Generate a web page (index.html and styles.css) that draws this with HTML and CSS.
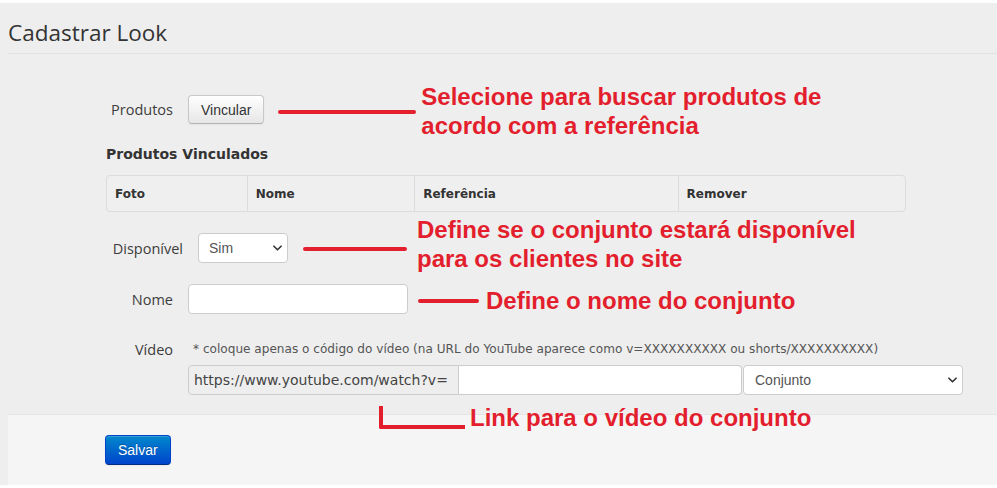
FILE: index.html
```html
<!DOCTYPE html>
<html lang="pt-BR">
<head>
<meta charset="utf-8">
<title>Cadastrar Look</title>
<link rel="stylesheet" href="styles.css">
</head>
<body>
<div class="page">
  <h1 class="page-title">Cadastrar Look</h1>

  <form class="form">
    <div class="row row-produtos">
      <span class="label">Produtos</span>
      <button type="button" class="btn">Vincular</button>
      <span class="mark mark-1"></span>
      <span class="note note-1">Selecione para buscar produtos de<br>acordo com a referência</span>
    </div>

    <div class="section-title">Produtos Vinculados</div>

    <table class="table">
      <thead>
        <tr>
          <th class="col-foto">Foto</th>
          <th class="col-nome">Nome</th>
          <th class="col-ref">Referência</th>
          <th class="col-rem">Remover</th>
        </tr>
      </thead>
    </table>

    <div class="row row-disp">
      <span class="label label-wide">Disponível</span>
      <span class="select-wrap select-sim">
        <select class="select"><option>Sim</option><option>Não</option></select>
        <svg class="chev" viewBox="0 0 10 6" width="9" height="6"><path d="M1 1l4 4 4-4" fill="none" stroke="#333" stroke-width="1.8" stroke-linecap="round" stroke-linejoin="round"/></svg>
      </span>
      <span class="mark mark-2"></span>
      <span class="note note-2">Define se o conjunto estará disponível<br>para os clientes no site</span>
    </div>

    <div class="row row-nome">
      <span class="label">Nome</span>
      <input class="input input-nome" type="text">
      <span class="mark mark-3"></span>
      <span class="note note-3">Define o nome do conjunto</span>
    </div>

    <div class="row row-hint">
      <span class="label">Vídeo</span>
      <span class="hint">* coloque apenas o código do vídeo (na URL do YouTube aparece como v=XXXXXXXXXX ou shorts/XXXXXXXXXX)</span>
    </div>

    <div class="row row-video">
      <div class="input-group">
        <span class="addon">https://www.youtube.com/watch?v=</span>
        <input class="input input-code" type="text">
      </div>
      <span class="select-wrap select-tipo">
        <select class="select"><option>Conjunto</option></select>
        <svg class="chev" viewBox="0 0 10 6" width="9" height="6"><path d="M1 1l4 4 4-4" fill="none" stroke="#333" stroke-width="1.8" stroke-linecap="round" stroke-linejoin="round"/></svg>
      </span>
      <div class="callout-video">
        <span class="mark-l"></span>
        <span class="note">Link para o vídeo do conjunto</span>
      </div>
    </div>
  </form>

  <div class="footer">
    <button type="button" class="btn btn-primary">Salvar</button>
  </div>
</div>
</body>
</html>
```

FILE: styles.css
```css
* { box-sizing: border-box; }

html, body {
  margin: 0;
  padding: 0;
  background: #ffffff;
}

body {
  padding-top: 3px;
  font-family: "Open Sans", "Liberation Sans", sans-serif;
  color: #333;
}

.page {
  background: #eeeeee;
  height: 482px;
  display: flex;
  flex-direction: column;
}

.page-title {
  margin: 0 0 0 8px;
  padding-top: 10px;
  height: 51px;
  line-height: 40px;
  font-size: 22.5px;
  font-weight: 400;
  color: #333;
  border-bottom: 1px solid #e2e2e2;
}

.form {
  padding: 41px 0 19px 106px;
  margin: 0;
  flex: 0 0 auto;
  position: relative;
}

.row {
  display: flex;
  align-items: center;
  height: 30px;
  position: relative;
}

.row-produtos { height: 29px; }

.label {
  width: 67px;
  padding-left: 5px;
  margin-right: 15px;
  text-align: right;
  font-size: 14.5px;
  color: #3d3d3d;
  white-space: nowrap;
  flex: 0 0 auto;
}
.label-wide { width: 77px; }

.btn {
  font-family: "Liberation Sans", Arial, sans-serif;
  font-size: 14px;
  color: #333;
  height: 29px;
  padding: 0 12px;
  border: 1px solid #c8c8c8;
  border-bottom-color: #b3b3b3;
  border-radius: 4px;
  background: linear-gradient(#ffffff, #e6e6e6);
  box-shadow: inset 0 1px 0 rgba(255,255,255,.2), 0 1px 2px rgba(0,0,0,.05);
  flex: 0 0 auto;
}

.btn-primary {
  height: 30px;
  color: #fff;
  border-color: #0044cc #0044cc #002a80;
  background: linear-gradient(#0088cc, #0044cc);
  text-shadow: 0 -1px 0 rgba(0,0,0,.25);
}

.mark {
  display: block;
  height: 4px;
  border-radius: 2px;
  background: #e31e2d;
  flex: 0 0 auto;
}
.mark-1 { width: 138px; margin-left: 14px; margin-top: 5px; }
.mark-2 { width: 104px; margin-left: 15px; margin-top: 2px; }
.mark-3 { width: 61px; margin-left: 10px; margin-top: 4px; }

.note {
  font-family: "Liberation Sans", Arial, sans-serif;
  font-weight: 700;
  font-size: 24px;
  line-height: 29px;
  color: #e31e2d;
  white-space: nowrap;
  flex: 0 0 auto;
}
.note-1 { margin-left: 5px; margin-top: 2px; }
.note-2 { margin-left: 10px; margin-bottom: 9px; }
.note-3 { margin-left: 7px; margin-top: 2px; }

.section-title {
  margin-top: 20px;
  height: 20px;
  line-height: 20px;
  font-family: "DejaVu Sans", Verdana, sans-serif;
  font-weight: 700;
  font-size: 14px;
  color: #333;
}

.table {
  margin-top: 11px;
  width: 800px;
  border-collapse: separate;
  border-spacing: 0;
  border: 1px solid #dcdcdc;
  border-radius: 4px;
  background: #efefef;
}

.table th {
  text-align: left;
  font-family: "DejaVu Sans", Verdana, sans-serif;
  font-size: 12px;
  font-weight: 700;
  color: #333;
  line-height: 20px;
  padding: 8px 8px 7px 8px;
  border-left: 1px solid #dcdcdc;
}
.table th:first-child { border-left: 0; }
.col-foto { width: 140px; }
.col-nome { width: 168px; }
.col-ref { width: 264px; }
.col-rem { width: 228px; }

.row-disp { margin-top: 21px; }
.row-nome { margin-top: 21px; }

.select-wrap {
  position: relative;
  display: block;
  flex: 0 0 auto;
}

.select {
  -webkit-appearance: none;
  appearance: none;
  height: 30px;
  margin: 0;
  padding: 0 22px 0 10px;
  font-family: "Liberation Sans", Arial, sans-serif;
  font-size: 14px;
  color: #555;
  background: #fff;
  border: 1px solid #cccccc;
  border-radius: 4px;
  outline: none;
}
.select-sim .select { width: 90px; }
.select-tipo { margin-left: 1px; }
.select-tipo .select { width: 220px; padding-left: 11px; }

.chev {
  position: absolute;
  right: 6px;
  top: 12px;
  pointer-events: none;
}

.input {
  height: 30px;
  margin: 0;
  padding: 0 8px;
  font-size: 14px;
  background: #fff;
  border: 1px solid #cccccc;
  border-radius: 4px;
  outline: none;
  flex: 0 0 auto;
}
.input-nome { width: 220px; }

.row-hint { height: 20px; margin-top: 25px; }

.hint {
  margin-left: 5px;
  font-family: "DejaVu Sans", Verdana, sans-serif;
  font-size: 12.1px;
  color: #555;
  white-space: nowrap;
}

.row-video { margin-top: 6px; padding-left: 82px; }

.input-group {
  display: flex;
  height: 30px;
}

.addon {
  display: flex;
  align-items: center;
  width: 271px;
  height: 30px;
  padding: 0 5px;
  font-family: "DejaVu Sans", Verdana, sans-serif;
  font-size: 14px;
  color: #444;
  background: #eeeeee;
  border: 1px solid #cccccc;
  border-radius: 4px 0 0 4px;
  white-space: nowrap;
}

.input-code {
  width: 283px;
  border-left: 0;
  border-radius: 0 4px 4px 0;
}

.callout-video {
  position: absolute;
  left: 273px;
  top: 38px;
  display: flex;
  align-items: flex-start;
}

.mark-l {
  display: block;
  margin-top: 3px;
  width: 86px;
  height: 23px;
  border-left: 4px solid #e31e2d;
  border-bottom: 4px solid #e31e2d;
  border-radius: 0 0 0 2px;
}

.callout-video .note { margin-left: 5px; }

.footer {
  margin-left: 8px;
  flex: 1 1 auto;
  background: #f5f5f5;
  border-top: 1px solid #e5e5e5;
  padding: 20px 0 0 97px;
}
```
